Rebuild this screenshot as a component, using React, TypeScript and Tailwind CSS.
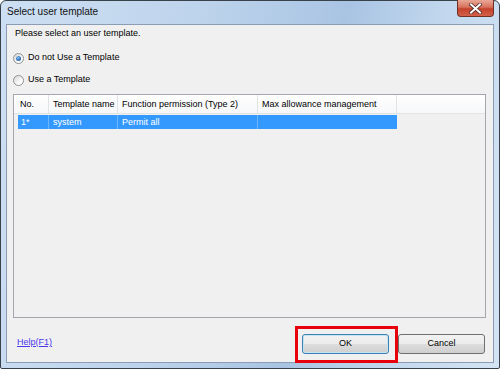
import React from "react";

function Radio({ checked }: { checked?: boolean }) {
  return (
    <span className="flex h-[11px] w-[11px] items-center justify-center rounded-full border border-[#8f9192] bg-[linear-gradient(135deg,#d6d6d6,#f8f8f8_60%,#ffffff)]">
      {checked && (
        <span className="h-[5px] w-[5px] rounded-full bg-[radial-gradient(circle_at_40%_35%,#8fc0ee,#2c6fb8_60%,#1d4f8f)]" />
      )}
    </span>
  );
}

function CloseButton() {
  return (
    <div className="-mt-[1px] flex h-[17px] w-[37px] items-center justify-center rounded-b-[4px] border border-t-0 border-[#6e3127] bg-[linear-gradient(to_bottom,#e9a797_0%,#d8715d_45%,#c5422c_55%,#d2604a_100%)]">
      <svg width="13" height="11" viewBox="0 0 13 11">
        <path d="M2 1.5 L11 9.5 M11 1.5 L2 9.5" stroke="#4b2a26" strokeWidth="3.6" strokeLinecap="square" />
        <path d="M2 1.5 L11 9.5 M11 1.5 L2 9.5" stroke="#ffffff" strokeWidth="2" strokeLinecap="square" />
      </svg>
    </div>
  );
}

const btn =
  "flex h-[20px] w-[87px] items-center justify-center rounded-[3px] border bg-[linear-gradient(to_bottom,#f2f2f2_0%,#ebebeb_50%,#dddddd_50%,#cfcfcf_100%)]";

export default function App() {
  return (
    <div className="relative h-[369px] w-[500px] font-['Liberation_Sans',Arial,sans-serif] text-[9px] text-black">
      <div className="flex h-full w-full flex-col rounded-t-[6px] rounded-b-[2px] border border-[#39414b] bg-[linear-gradient(100deg,#cddff2_0%,#bed4ec_35%,#a9c4e3_62%,#c3d8ee_80%,#d4e4f4_100%)] px-[5px] pb-[5px]">
        <div className="flex h-[23px] items-start justify-between">
          <span className="pl-[1px] pt-[5px] text-[10px] leading-[12px] text-[#111]">Select user template</span>
          <CloseButton />
        </div>

        <div className="flex flex-1 flex-col border border-[#8a9db5] bg-[#f0f0f0]">
          <div className="h-[16px] pl-[8px] leading-[16px]">Please select an user template.</div>

          <label className="mt-[9px] flex h-[16px] items-center gap-[4px] pl-[6px]">
            <Radio checked />
            <span>Do not Use a Template</span>
          </label>
          <label className="mt-[6px] flex h-[16px] items-center gap-[4px] pl-[6px]">
            <Radio />
            <span>Use a Template</span>
          </label>

          <div className="ml-[6px] mr-[7px] mt-[6px] h-[224px] border border-[#a3a7ad] bg-[#f0f0f0]">
            <div className="flex h-[19px] border-b border-[#e3e4e6] bg-[linear-gradient(to_bottom,#ffffff,#f6f7f9)] leading-[18px]">
              <div className="w-[35px] border-r border-[#e1e3e6] pl-[6px]">No.</div>
              <div className="w-[69px] border-r border-[#e1e3e6] pl-[4px]">Template name</div>
              <div className="w-[140px] border-r border-[#e1e3e6] pl-[4px]">Function permission (Type 2)</div>
              <div className="w-[139px] border-r border-[#e1e3e6] pl-[4px]">Max allowance management</div>
            </div>
            <div className="mt-[1px] flex h-[14px] pl-[4px] leading-[14px] text-white">
              <div className="w-[31px] border-r border-[#6db5ff] bg-[#3399ff] pl-[3px]">1*</div>
              <div className="w-[69px] border-r border-[#6db5ff] bg-[#3399ff] pl-[4px]">system</div>
              <div className="w-[140px] border-r border-[#6db5ff] bg-[#3399ff] pl-[4px]">Permit all</div>
              <div className="w-[139px] bg-[#3399ff]" />
            </div>
          </div>

          <div className="mr-[8px] mt-[16px] flex items-start">
            <a className="pl-[10px] pt-[1px] leading-[14px] text-[#4b37ee] underline" href="#">
              Help(F1)
            </a>
            <div className="ml-auto flex gap-[9px]">
              <button className={`${btn} border-[#3c7fb1] shadow-[inset_0_0_0_1px_#c4e5f6]`}>OK</button>
              <button className={`${btn} border-[#707070]`}>Cancel</button>
            </div>
          </div>
        </div>
      </div>
      <div className="absolute left-[295px] top-[326px] h-[37px] w-[103px] border-[3px] border-[#e8000b]" />
    </div>
  );
}
